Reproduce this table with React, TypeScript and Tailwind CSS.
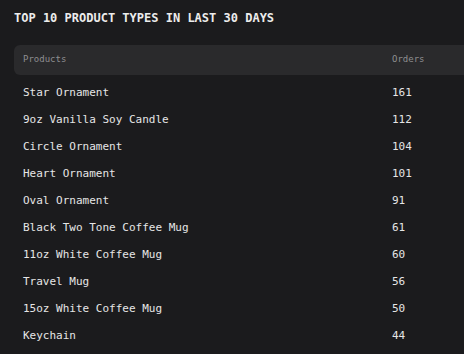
import React from 'react';

const rows = [
  { name: 'Star Ornament', orders: 161 },
  { name: '9oz Vanilla Soy Candle', orders: 112 },
  { name: 'Circle Ornament', orders: 104 },
  { name: 'Heart Ornament', orders: 101 },
  { name: 'Oval Ornament', orders: 91 },
  { name: 'Black Two Tone Coffee Mug', orders: 61 },
  { name: '11oz White Coffee Mug', orders: 60 },
  { name: 'Travel Mug', orders: 56 },
  { name: '15oz White Coffee Mug', orders: 50 },
  { name: 'Keychain', orders: 44 },
];

const App = () => {
  return (
    <div
      className="w-[464px] h-[354px] overflow-hidden bg-[#1b1b1d] pl-[14px] pt-[10px]"
      style={{ fontFamily: '"DejaVu Sans Mono", "Liberation Mono", monospace' }}
    >
      <div className="text-[12px] leading-[16px] font-bold text-[#ececec]">
        TOP 10 PRODUCT TYPES IN LAST 30 DAYS
      </div>

      <div className="mt-[19px] w-[500px]">
        <div className="flex items-center h-[30px] rounded-[6px] bg-[#2a2a2c] pl-[9px] text-[9px] text-[#8e8e90]">
          <div className="w-[369px]">Products</div>
          <div>Orders</div>
        </div>
        <div className="pt-[5px]">
          {rows.map((row) => (
            <div
              key={row.name}
              className="flex items-center h-[27px] pl-[9px] text-[11px] text-[#e6e6e6]"
            >
              <div className="w-[369px]">{row.name}</div>
              <div>{row.orders}</div>
            </div>
          ))}
        </div>
      </div>
    </div>
  );
};

export default App;
